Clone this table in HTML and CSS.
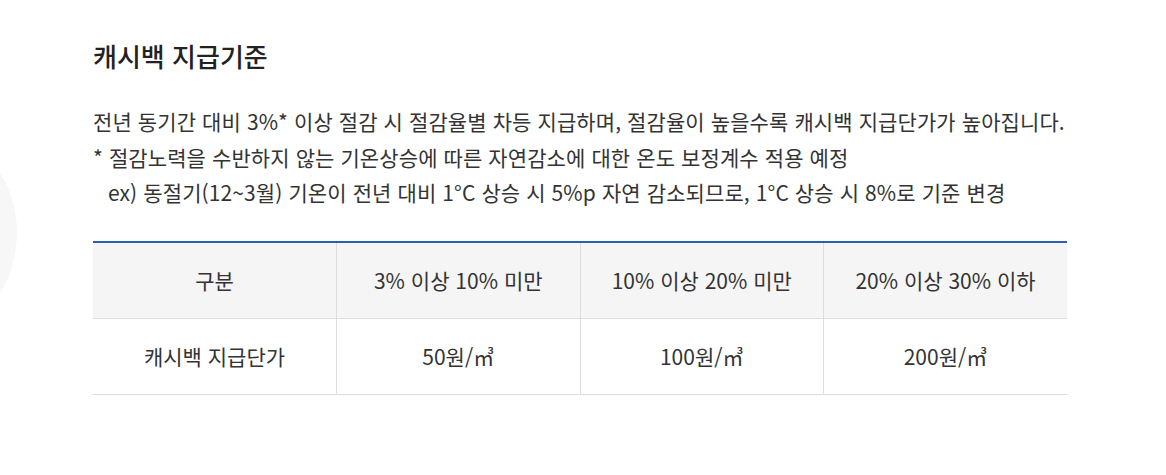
FILE: index.html
```html
<!DOCTYPE html>
<html lang="ko">
<head>
<meta charset="utf-8">
<title>캐시백 지급기준</title>
<link rel="stylesheet" href="styles.css">
</head>
<body>
<div class="deco"></div>
<section class="content">
  <h2 class="title">캐시백 지급기준</h2>
  <div class="desc">
    <p class="line">전년 동기간 대비 3%* 이상 절감 시 절감율별 차등 지급하며, 절감율이 높을수록 캐시백 지급단가가 높아집니다.</p>
    <p class="line">* 절감노력을 수반하지 않는 기온상승에 따른 자연감소에 대한 온도 보정계수 적용 예정</p>
    <p class="line indent">ex) 동절기(12~3월) 기온이 전년 대비 1°C 상승 시 5%p 자연 감소되므로, 1°C 상승 시 8%로 기준 변경</p>
  </div>
  <table class="tbl">
    <thead>
      <tr>
        <th>구분</th>
        <th>3% 이상 10% 미만</th>
        <th>10% 이상 20% 미만</th>
        <th>20% 이상 30% 이하</th>
      </tr>
    </thead>
    <tbody>
      <tr>
        <td>캐시백 지급단가</td>
        <td>50원/㎥</td>
        <td>100원/㎥</td>
        <td>200원/㎥</td>
      </tr>
    </tbody>
  </table>
</section>
</body>
</html>
```
FILE: styles.css
```css
html, body {
  margin: 0;
  padding: 0;
  background: #fff;
}
body {
  font-family: "Noto Sans CJK KR", "Noto Sans", sans-serif;
  color: #333;
  position: relative;
  width: 1166px;
  height: 475px;
  overflow: hidden;
}
.deco {
  position: absolute;
  left: -215px;
  top: 117px;
  width: 232px;
  height: 232px;
  border-radius: 50%;
  background: #f7f7f7;
}
.content {
  position: relative;
  margin-left: 93px;
  width: 974px;
  padding-top: 39px;
}
.title {
  margin: 0;
  font-size: 26px;
  line-height: 34px;
  font-weight: 500;
  color: #222;
}
.desc {
  margin-top: 31px;
}
.line {
  margin: 0;
  font-size: 21px;
  line-height: 35.5px;
  letter-spacing: 0.1px;
  color: #333;
  white-space: nowrap;
}
.indent {
  padding-left: 15px;
}
.tbl {
  margin-top: 30px;
  width: 974px;
  border-collapse: collapse;
  table-layout: fixed;
  border-top: 2px solid #2b5cb8;
}
.tbl th, .tbl td {
  height: 75px;
  padding: 0;
  text-align: center;
  font-size: 21px;
  font-weight: 400;
  color: #333;
  border-bottom: 1px solid #ddd;
  border-left: 1px solid #ddd;
}
.tbl th:first-child, .tbl td:first-child {
  border-left: none;
}
.tbl th {
  background: #f5f5f5;
}
```
